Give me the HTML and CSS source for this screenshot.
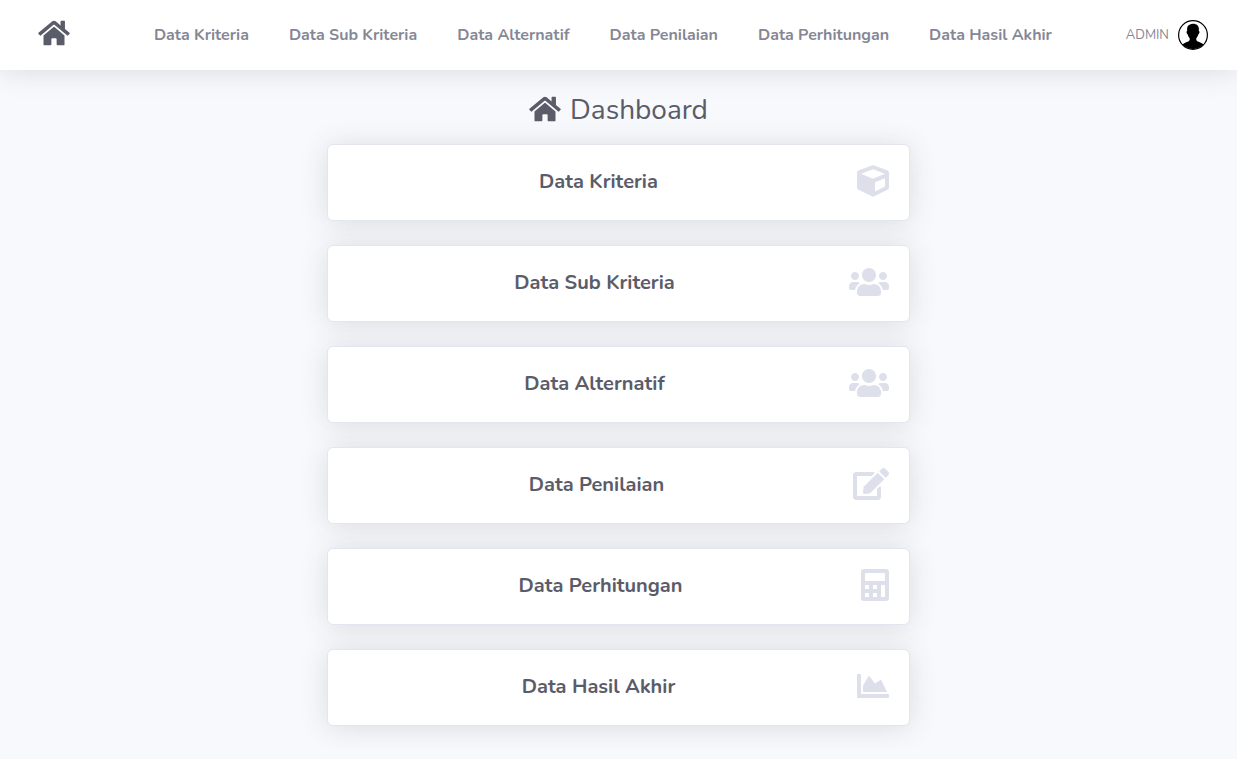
FILE: index.html
```html
<!DOCTYPE html>
<html lang="id">
<head>
<meta charset="utf-8">
<meta name="viewport" content="width=device-width, initial-scale=1">
<title>Dashboard</title>
<link rel="stylesheet" href="styles.css">
</head>
<body>
<svg class="sprite" aria-hidden="true">
  <symbol id="home" viewBox="0 0 576 512"><path d="M280.37 148.26L96 300.11V464a16 16 0 0 0 16 16l112.06-.29a16 16 0 0 0 15.92-16V368a16 16 0 0 1 16-16h64a16 16 0 0 1 16 16v95.64a16 16 0 0 0 16 16.05L464 480a16 16 0 0 0 16-16V300L295.67 148.26a12.19 12.19 0 0 0-15.3 0zM571.6 251.47L488 182.56V44.05a12 12 0 0 0-12-12h-56a12 12 0 0 0-12 12v72.61L318.47 43a48 48 0 0 0-61 0L4.34 251.47a12 12 0 0 0-1.6 16.9l25.5 31A12 12 0 0 0 45.15 301l235.22-193.74a12.19 12.19 0 0 1 15.3 0L530.9 301a12 12 0 0 0 16.9-1.6l25.5-31a12 12 0 0 0-1.7-16.93z"/></symbol>
  <symbol id="users" viewBox="0 0 640 512"><path d="M96 224c35.3 0 64-28.7 64-64s-28.7-64-64-64-64 28.7-64 64 28.7 64 64 64zm448 0c35.3 0 64-28.7 64-64s-28.7-64-64-64-64 28.7-64 64 28.7 64 64 64zm32 32h-64c-17.6 0-33.5 7.1-45.1 18.6 40.3 22.1 68.9 62 75.1 109.4h66c17.7 0 32-14.3 32-32v-32c0-35.3-28.7-64-64-64zm-256 0c61.9 0 112-50.1 112-112S381.9 32 320 32 208 82.1 208 144s50.1 112 112 112zm76.8 32h-8.3c-20.8 10-43.9 16-68.5 16s-47.6-6-68.5-16h-8.3C179.6 288 128 339.6 128 403.2V432c0 26.5 21.5 48 48 48h288c26.5 0 48-21.5 48-48v-28.8c0-63.6-51.6-115.2-115.2-115.2zm-223.7-13.4C161.5 263.1 145.6 256 128 256H64c-35.3 0-64 28.7-64 64v32c0 17.7 14.3 32 32 32h65.9c6.3-47.4 34.9-87.3 75.2-109.4z"/></symbol>
</svg>

<header class="topbar">
  <a class="brand" href="#" aria-label="Dashboard"><svg class="icon-home"><use href="#home"/></svg></a>
  <nav class="menu">
    <a href="#">Data Kriteria</a>
    <a href="#">Data Sub Kriteria</a>
    <a href="#">Data Alternatif</a>
    <a href="#">Data Penilaian</a>
    <a href="#">Data Perhitungan</a>
    <a href="#">Data Hasil Akhir</a>
  </nav>
  <button class="user" type="button">
    <span>ADMIN</span>
    <svg class="avatar" viewBox="0 0 30 30" aria-hidden="true">
      <circle cx="15" cy="15" r="14.4" fill="#fff" stroke="#000" stroke-width="1.2"/>
      <path d="M15 3.800c3.900 0 6 2.300 5.900 5.600l-.1 1.500c.8.1.8 1.200.5 2.200-.3.900-.6 1.300-1.100 1.400-.3 1.600-1 2.800-1.900 3.700-.2 1.600.2 2.700 1.400 3.300 2 .9 4.300 1.400 5.700 2.900A14.200 14.200 0 0 1 4.600 24.400c1.400-1.500 3.700-2 5.700-2.900 1.200-.6 1.600-1.700 1.400-3.300-.9-.9-1.600-2.100-1.900-3.700-.5-.1-.8-.5-1.100-1.400-.3-1-.3-2.100.5-2.200L9.100 9.400C9 6.900 10 5.300 11.600 4.800c1-.7 2.100-1 3.400-1z"/>
    </svg>
  </button>
</header>

<main class="content">
  <h1 class="title"><svg class="icon-home" aria-hidden="true"><use href="#home"/></svg>Dashboard</h1>
  <div class="cards">
    <a class="card" href="#"><span class="label">Data Kriteria</span><svg class="icon w-32" viewBox="0 0 512 512" aria-hidden="true"><path d="M239.1 6.3l-208 78c-18.700 7-31.100 25-31.100 45v225.100c0 18.200 10.300 34.800 26.500 42.900l208 104c13.500 6.800 29.400 6.800 42.900 0l208-104c16.300-8.100 26.500-24.800 26.500-42.900V129.300c0-20-12.400-37.900-31.100-44.900l-208-78C262 2.200 250 2.200 239.100 6.300zM256 68.400l192 72v1.100l-192 78-192-78v-1.100l192-72zm32 356V275.500l160-65v133.900l-160 80z"/></svg></a>
    <a class="card" href="#"><span class="label">Data Sub Kriteria</span><svg class="icon w-40" aria-hidden="true"><use href="#users"/></svg></a>
    <a class="card" href="#"><span class="label">Data Alternatif</span><svg class="icon w-40" aria-hidden="true"><use href="#users"/></svg></a>
    <a class="card" href="#"><span class="label">Data Penilaian</span><svg class="icon w-36" viewBox="0 0 576 512" aria-hidden="true"><path d="M402.6 83.2l90.2 90.2c3.8 3.8 3.8 10 0 13.8L274.4 405.6l-92.8 10.3c-12.4 1.4-22.9-9.1-21.5-21.5l10.3-92.8L388.8 83.2c3.8-3.8 10-3.8 13.8 0zm162-22.9l-48.8-48.8c-15.2-15.2-39.9-15.2-55.2 0l-35.4 35.4c-3.8 3.8-3.8 10 0 13.8l90.2 90.2c3.8 3.8 10 3.8 13.8 0l35.4-35.4c15.2-15.3 15.2-40 0-55.2zM384 346.2V448H64V128h229.8c3.2 0 6.2-1.3 8.500-3.500l40-40c7.600-7.600 2.200-20.500-8.500-20.500H48C21.500 64 0 85.500 0 112v352c0 26.500 21.500 48 48 48h352c26.500 0 48-21.500 48-48V306.200c0-10.700-12.900-16-20.500-8.500l-40 40c-2.200 2.300-3.500 5.300-3.500 8.500z"/></svg></a>
    <a class="card" href="#"><span class="label">Data Perhitungan</span><svg class="icon w-28" viewBox="0 0 448 512" aria-hidden="true"><path fill-rule="evenodd" d="M48 0h352a48 48 0 0 1 48 48v416a48 48 0 0 1-48 48H48a48 48 0 0 1-48-48V48A48 48 0 0 1 48 0zM76 64a12 12 0 0 0-12 12v104a12 12 0 0 0 12 12h296a12 12 0 0 0 12-12V76a12 12 0 0 0-12-12zM64 256v64h64v-64zM192 256v64h64v-64zM64 384v64h64v-64zM192 384v64h64v-64zM320 256v192h64V256z"/></svg></a>
    <a class="card" href="#"><span class="label">Data Hasil Akhir</span><svg class="icon w-32" viewBox="0 0 512 512" aria-hidden="true"><path d="M500 384c6.600 0 12 5.400 12 12v40c0 6.600-5.400 12-12 12H12c-6.600 0-12-5.400-12-12V76c0-6.600 5.400-12 12-12h40c6.600 0 12 5.400 12 12v308h436zM372.700 159.500L288 216l-85.300-113.700c-5.100-6.800-15.500-6.300-19.900 1L96 248v104h384l-89.900-187.800c-3.200-6.500-11.400-8.700-17.400-4.700z"/></svg></a>
  </div>
</main>
</body>
</html>
```
FILE: styles.css
```css
* { box-sizing: border-box; }

body {
  margin: 0;
  background: #f8f9fc;
  color: #858796;
  font-family: Nunito, Lato, "Open Sans", sans-serif;
  font-size: 16px;
  line-height: 24px;
}

a { color: inherit; text-decoration: none; }

.sprite { display: none; }

.icon-home {
  display: block;
  width: 32px;
  height: 28px;
  fill: #5a5c69;
}

.topbar {
  display: flex;
  align-items: center;
  justify-content: space-between;
  height: 70px;
  padding: 0 29px 0 38px;
  background: #fff;
  box-shadow: 0 2px 28px rgba(58, 59, 69, 0.15);
}

.brand {
  padding-right: 10px;
  padding-bottom: 4px;
}

.menu {
  display: flex;
  gap: 40px;
  font-weight: 700;
  white-space: nowrap;
}

.user {
  display: flex;
  align-items: center;
  gap: 9px;
  padding: 0;
  border: 0;
  background: none;
  color: inherit;
  font: inherit;
  font-size: 13px;
}

.avatar {
  display: block;
  width: 30px;
  height: 30px;
}

.content { padding: 24px 12px; }

.title {
  display: flex;
  align-items: center;
  justify-content: center;
  gap: 9px;
  margin: 0 0 18px;
  color: #5a5c69;
  font-size: 28px;
  font-weight: 400;
  line-height: 32px;
}

.title .icon-home { margin-bottom: 2px; }

.cards {
  display: flex;
  flex-direction: column;
  gap: 24px;
  width: 50%;
  margin: 0 auto;
  padding: 0 12px;
}

.card {
  display: flex;
  gap: 8px;
  min-height: 77px;
  padding: 20px;
  border: 1px solid #e3e6f0;
  border-radius: 6px;
  background: #fff;
  box-shadow: 0 2px 28px rgba(58, 59, 69, 0.15);
  color: #5a5c69;
  font-size: 20px;
  font-weight: 700;
  line-height: 34px;
}

.label { flex: 1; text-align: center; }

.icon {
  height: 32px;
  fill: #dddfeb;
}

.w-28 { width: 28px; }
.w-32 { width: 32px; }
.w-36 { width: 36px; }
.w-40 { width: 40px; }
```
